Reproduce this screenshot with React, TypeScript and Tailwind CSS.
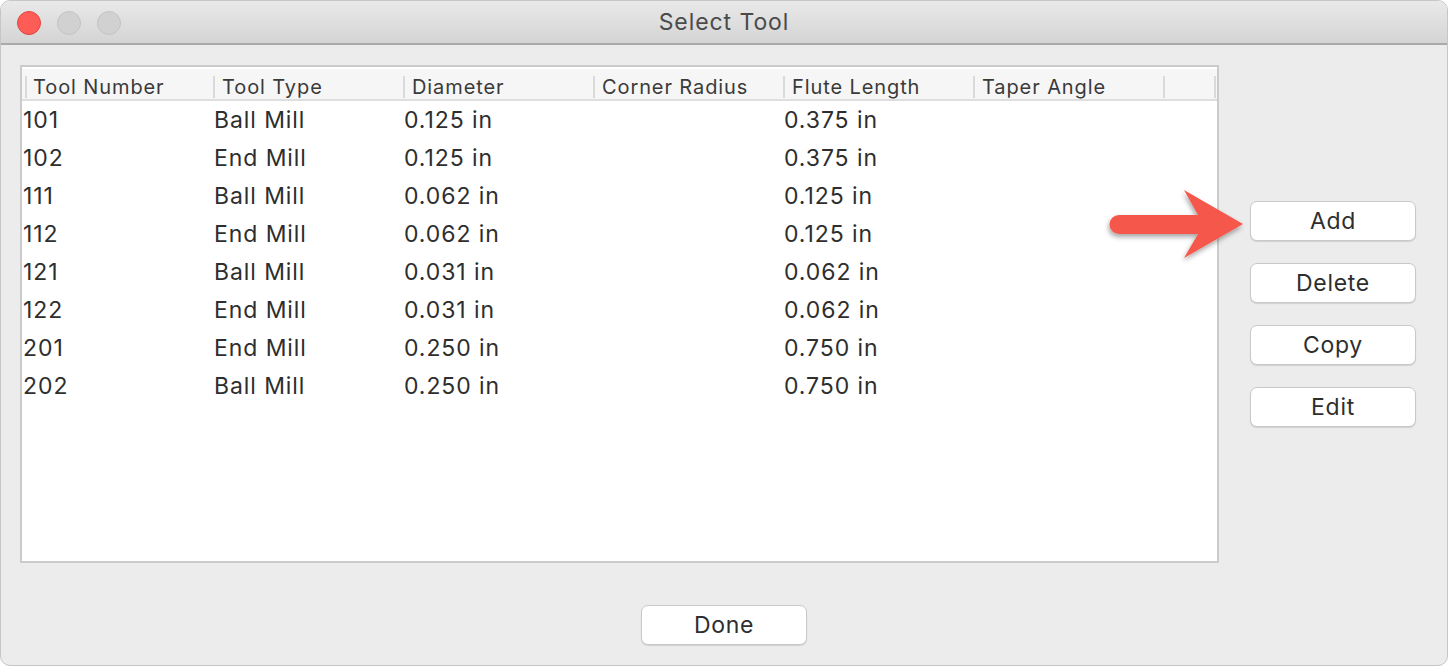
import React from "react";

const COLUMNS = ["Tool Number", "Tool Type", "Diameter", "Corner Radius", "Flute Length", "Taper Angle"];

const TOOLS = [
  ["101", "Ball Mill", "0.125 in", "", "0.375 in", ""],
  ["102", "End Mill", "0.125 in", "", "0.375 in", ""],
  ["111", "Ball Mill", "0.062 in", "", "0.125 in", ""],
  ["112", "End Mill", "0.062 in", "", "0.125 in", ""],
  ["121", "Ball Mill", "0.031 in", "", "0.062 in", ""],
  ["122", "End Mill", "0.031 in", "", "0.062 in", ""],
  ["201", "End Mill", "0.250 in", "", "0.750 in", ""],
  ["202", "Ball Mill", "0.250 in", "", "0.750 in", ""],
];

const GRID = "grid grid-cols-[191px_190px_190px_190px_190px_190px_1fr]";

function MacButton({ label }: { label: string }) {
  return (
    <button className="h-[40px] w-[166px] rounded-[7px] border border-[#c9c9c9] bg-white text-[23px] tracking-[0.03em] text-[#2e2e2e] shadow-[0_1px_1px_rgba(0,0,0,0.12)]">
      {label}
    </button>
  );
}

function Arrow() {
  return (
    <svg className="absolute left-[1095px] top-[180px]" width="160" height="95" viewBox="1095 180 160 95">
      <defs>
        <filter id="sh" x="-20%" y="-30%" width="140%" height="160%">
          <feDropShadow dx="-1" dy="3" stdDeviation="2.5" floodColor="#000" floodOpacity="0.35" />
        </filter>
      </defs>
      <path
        d="M1118 214 L1197 214 L1183 189 L1242 223 L1183 257 L1197 233 L1118 233 A9.5 9.5 0 0 1 1118 214 Z"
        fill="#f5584b"
        filter="url(#sh)"
      />
    </svg>
  );
}

export default function App() {
  return (
    <div
      className="relative h-[666px] w-[1448px] overflow-hidden rounded-[10px] border border-[#c6c6c6] bg-[#ececec]"
      style={{ fontFamily: "Inter, 'Helvetica Neue', Arial, sans-serif" }}
    >
      {/* title bar */}
      <div className="relative flex h-[44px] items-center border-b-2 border-[#a9a9a9] bg-gradient-to-b from-[#e9e9e9] to-[#d4d4d4]">
        <div className="absolute left-[16px] top-[10px] flex gap-[16px]">
          <span className="h-[24px] w-[24px] rounded-full border border-[#e2463f] bg-[#fd5d56]" />
          <span className="h-[24px] w-[24px] rounded-full border border-[#c3c3c3] bg-[#d1d1d1]" />
          <span className="h-[24px] w-[24px] rounded-full border border-[#c3c3c3] bg-[#d1d1d1]" />
        </div>
        <div className="w-full text-center text-[23px] tracking-[0.04em] text-[#4b4b4b]">Select Tool</div>
      </div>

      {/* body */}
      <div className="flex pl-[19px] pt-[20px]">
        <div className="h-[498px] w-[1199px] border-2 border-[#cbcbcb] bg-white pt-[2px]">
          <div className={`${GRID} h-[32px] border-b-2 border-[#dedede] bg-[#f6f6f6] pt-[3px] text-[20px] tracking-[0.045em] text-[#3a3a3a]`}>
            {COLUMNS.map((c, i) => (
              <div key={c} className={`flex items-center ${i === 0 ? "pl-[3px]" : ""}`}>
                <span className="h-[22px] w-[2px] bg-[#dadada]" />
                <span className={i === 0 ? "ml-[6px]" : "ml-[7px]"}>{c}</span>
              </div>
            ))}
            <div className="flex items-center justify-between pr-[1px]">
              <span className="h-[22px] w-[2px] bg-[#dadada]" />
              <span className="h-[22px] w-[2px] bg-[#dadada]" />
            </div>
          </div>
          {TOOLS.map((row) => (
            <div key={row[0]} className={`${GRID} h-[38px] items-center text-[23px] tracking-[0.04em] text-[#2e2e2e]`}>
              {row.map((cell, i) => (
                <div key={i} className="pl-[1px]">
                  {cell}
                </div>
              ))}
              <div />
            </div>
          ))}
        </div>

        <div className="ml-[31px] flex flex-col gap-[22px] pt-[136px]">
          <MacButton label="Add" />
          <MacButton label="Delete" />
          <MacButton label="Copy" />
          <MacButton label="Edit" />
        </div>
      </div>

      <div className="flex justify-center pt-[42px]">
        <MacButton label="Done" />
      </div>

      <Arrow />
    </div>
  );
}
